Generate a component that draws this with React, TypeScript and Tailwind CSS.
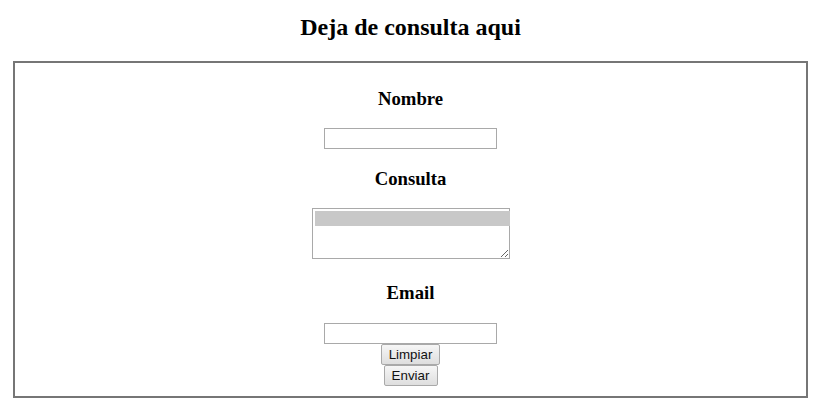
export default function App() {
  return (
    <div className="w-full bg-white font-['Liberation_Serif',serif] text-black">
      <div className="ml-[13px] w-[795px]">
        <h2 className="mt-[14px] mb-[20px] text-center text-[24px] leading-[27px] font-bold">
          Deja de consulta aqui
        </h2>
        <form className="flex flex-col items-center border-2 border-[#767676] pt-[7px] pb-[10px]">
          <h3 className="mt-[18px] mb-[19px] text-[18.72px] leading-[21px] font-bold">Nombre</h3>
          <input
            type="text"
            className="h-[21px] w-[173px] border border-[#a9a9a9] bg-white px-[2px] font-['Liberation_Sans',sans-serif] text-[13.33px] outline-none"
          />
          <h3 className="mt-[19px] mb-[19px] text-[18.72px] leading-[21px] font-bold">Consulta</h3>
          <div className="relative h-[51px] w-[198px]">
            <textarea className="h-[51px] w-[198px] border border-[#a9a9a9] bg-white font-['Liberation_Mono',monospace] text-[13.33px] outline-none" />
            <span className="pointer-events-none absolute top-[3px] left-[3px] h-[15px] w-[195px] bg-[#c8c8c8]" />
          </div>
          <h3 className="mt-[23px] mb-[20px] text-[18.72px] leading-[21px] font-bold">Email</h3>
          <input
            type="email"
            className="h-[21px] w-[173px] border border-[#a9a9a9] bg-white px-[2px] font-['Liberation_Sans',sans-serif] text-[13.33px] outline-none"
          />
          <button
            type="reset"
            className="h-[21px] w-[59px] rounded-[2px] border border-[#a9a9a9] bg-gradient-to-b from-[#f6f6f6] to-[#dedede] font-['Liberation_Sans',sans-serif] text-[13.33px] leading-[19px] text-[#111]"
          >
            Limpiar
          </button>
          <button
            type="submit"
            className="h-[21px] w-[54px] rounded-[2px] border border-[#a9a9a9] bg-gradient-to-b from-[#f6f6f6] to-[#dedede] font-['Liberation_Sans',sans-serif] text-[13.33px] leading-[19px] text-[#111]"
          >
            Enviar
          </button>
        </form>
      </div>
    </div>
  );
}
